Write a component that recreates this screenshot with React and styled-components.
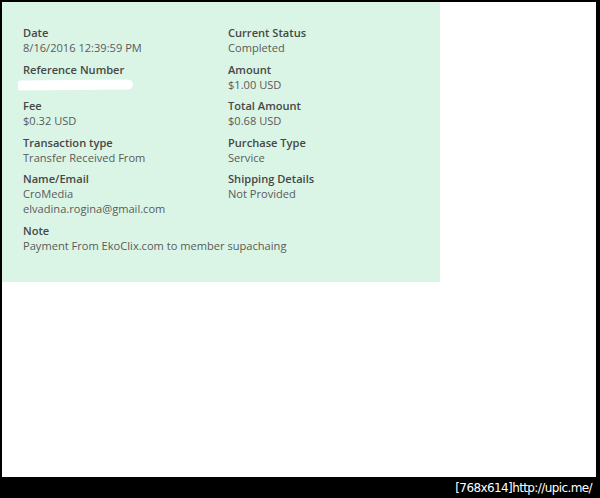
import React from 'react';
import styled, { createGlobalStyle } from 'styled-components';

const GlobalStyle = createGlobalStyle`
  html, body {
    margin: 0;
    padding: 0;
    background: #000;
  }
  * { box-sizing: border-box; }
`;

const left = [
  { label: 'Date', lines: ['8/16/2016 12:39:59 PM'] },
  { label: 'Reference Number', redacted: true },
  { label: 'Fee', lines: ['$0.32 USD'] },
  { label: 'Transaction type', lines: ['Transfer Received From'] },
  { label: 'Name/Email', lines: ['CroMedia', 'elvadina.rogina@gmail.com'] },
];

const right = [
  { label: 'Current Status', lines: ['Completed'] },
  { label: 'Amount', lines: ['$1.00 USD'] },
  { label: 'Total Amount', lines: ['$0.68 USD'] },
  { label: 'Purchase Type', lines: ['Service'] },
  { label: 'Shipping Details', lines: ['Not Provided'] },
];

const Detail = ({ item }) => (
  <Field>
    <Label>{item.label}</Label>
    {item.redacted ? <Scribble /> : item.lines.map((l) => <Value key={l}>{l}</Value>)}
  </Field>
);

const App = () => {
  return (
    <>
      <GlobalStyle />
      <Frame>
        <Page>
          <Panel>
            <Grid>
              {left.map((item, i) => (
                <React.Fragment key={item.label}>
                  <Detail item={item} />
                  <Detail item={right[i]} />
                </React.Fragment>
              ))}
            </Grid>
            <Field>
              <Label>Note</Label>
              <Value>Payment From EkoClix.com to member supachaing</Value>
            </Field>
          </Panel>
        </Page>
        <Footer>[768x614]http://upic.me/</Footer>
      </Frame>
    </>
  );
};

const Frame = styled.div`
  width: 600px;
  height: 498px;
  background: #000;
  padding: 2px 4px 0 2px;
  display: flex;
  flex-direction: column;
`;

const Page = styled.div`
  height: 475px;
  background: #fff;
`;

const Panel = styled.div`
  width: 438px;
  height: 280px;
  background: #daf5e5;
  padding: 23px 20px 0 21px;
  font-family: 'Open Sans', 'Noto Sans', sans-serif;
  font-size: 11.1px;
`;

const Grid = styled.div`
  display: grid;
  grid-template-columns: 205px 1fr;
`;

const Field = styled.div`
  margin-bottom: 6.5px;
  line-height: 15px;
`;

const Label = styled.div`
  font-weight: 600;
  color: #474747;
`;

const Value = styled.div`
  color: #5a5a5a;
`;

const Scribble = styled.div`
  width: 115px;
  height: 10px;
  margin: 3px 0 2px -5px;
  background: #fff;
  border-radius: 3px 6px 5px 2px;
  transform: rotate(-0.6deg);
`;

const Footer = styled.div`
  flex: 1;
  display: flex;
  align-items: center;
  justify-content: flex-end;
  padding-right: 4px;
  color: #fff;
  font-family: 'DejaVu Sans', sans-serif;
  font-size: 12px;
  letter-spacing: -0.6px;
`;

export default App;
